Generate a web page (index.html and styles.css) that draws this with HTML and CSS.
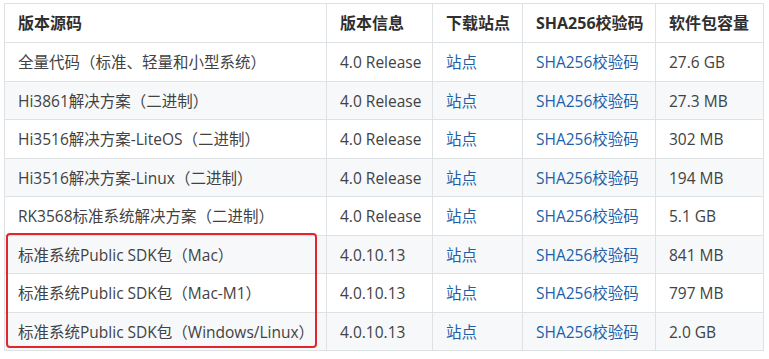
FILE: index.html
```html
<!DOCTYPE html>
<html lang="zh-CN">
<head>
<meta charset="utf-8">
<link rel="stylesheet" href="styles.css">
</head>
<body>
<div class="wrap">
  <table class="dl">
    <colgroup>
      <col class="c1"><col class="c2"><col class="c3"><col class="c4"><col class="c5">
    </colgroup>
    <thead>
      <tr><th>版本源码</th><th>版本信息</th><th>下载站点</th><th>SHA256校验码</th><th>软件包容量</th></tr>
    </thead>
    <tbody>
      <tr><td>全量代码（标准、轻量和小型系统）</td><td>4.0 Release</td><td><a href="#">站点</a></td><td><a href="#">SHA256校验码</a></td><td>27.6 GB</td></tr>
      <tr><td>Hi3861解决方案（二进制）</td><td>4.0 Release</td><td><a href="#">站点</a></td><td><a href="#">SHA256校验码</a></td><td>27.3 MB</td></tr>
      <tr><td>Hi3516解决方案-LiteOS（二进制）</td><td>4.0 Release</td><td><a href="#">站点</a></td><td><a href="#">SHA256校验码</a></td><td>302 MB</td></tr>
      <tr><td>Hi3516解决方案-Linux（二进制）</td><td>4.0 Release</td><td><a href="#">站点</a></td><td><a href="#">SHA256校验码</a></td><td>194 MB</td></tr>
      <tr><td>RK3568标准系统解决方案（二进制）</td><td>4.0 Release</td><td><a href="#">站点</a></td><td><a href="#">SHA256校验码</a></td><td>5.1 GB</td></tr>
      <tr><td>标准系统Public SDK包（Mac）</td><td>4.0.10.13</td><td><a href="#">站点</a></td><td><a href="#">SHA256校验码</a></td><td>841 MB</td></tr>
      <tr><td>标准系统Public SDK包（Mac-M1）</td><td>4.0.10.13</td><td><a href="#">站点</a></td><td><a href="#">SHA256校验码</a></td><td>797 MB</td></tr>
      <tr><td>标准系统Public SDK包（Windows/Linux）</td><td>4.0.10.13</td><td><a href="#">站点</a></td><td><a href="#">SHA256校验码</a></td><td>2.0 GB</td></tr>
    </tbody>
  </table>
  <div class="highlight"></div>
</div>
</body>
</html>
```
FILE: styles.css
```css
html, body {
  margin: 0;
  padding: 0;
  background: #ffffff;
}
.wrap {
  position: relative;
  padding: 3px 0 0 4px;
}
.dl {
  border-collapse: collapse;
  table-layout: fixed;
  width: 759px;
  font-family: "Open Sans", "Noto Sans CJK SC", sans-serif;
  font-size: 15.5px;
  color: #424242;
}
.c1 { width: 322px; }
.c2 { width: 106px; }
.c3 { width: 90px; }
.c4 { width: 133px; }
.c5 { width: 108px; }
.dl th, .dl td {
  border: 1px solid #dfe2e5;
  padding: 6px 13px;
  line-height: 25.5px;
  text-align: left;
  white-space: nowrap;
}
.dl td {
  padding-top: 7px;
  padding-bottom: 5px;
}
.dl th {
  font-weight: 700;
  font-size: 16px;
  color: #2f2f2f;
  line-height: 26px;
}
.dl tbody tr:nth-child(2n) {
  background: #f6f8fa;
}
.dl a {
  color: #1e5fa8;
  text-decoration: none;
}
.highlight {
  position: absolute;
  left: 6px;
  top: 233px;
  width: 311px;
  height: 115px;
  box-sizing: border-box;
  border: 2px solid #e3262b;
  border-radius: 4px;
}
```
